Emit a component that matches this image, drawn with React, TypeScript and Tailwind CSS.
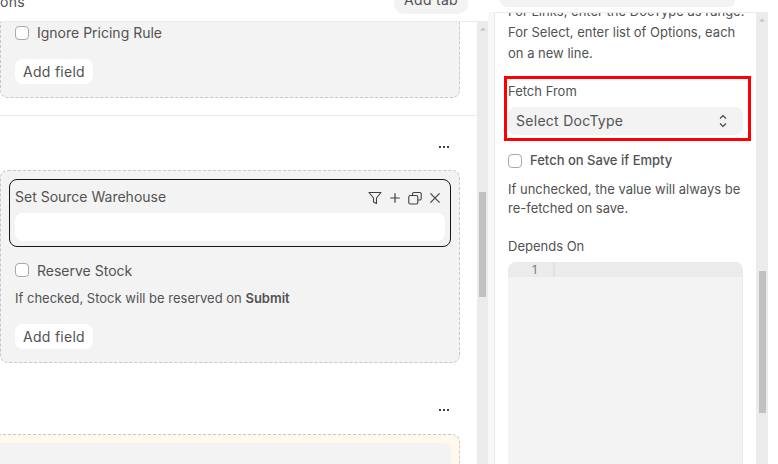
import React from "react";

const Checkbox = (): JSX.Element => (
  <span className="block w-[14px] h-[14px] rounded-[4px] border border-[#a8a8a8] bg-white shrink-0"></span>
);

const AddField = (): JSX.Element => (
  <button className="h-[25px] w-[78px] rounded-[8px] bg-white text-[14px] leading-[25px] tracking-[0.02em] text-[#525252] text-center">Add field</button>
);

const Dots = (): JSX.Element => (
  <div className="flex justify-end gap-[2px] pr-[28px]">
    <span className="w-[2px] h-[2px] bg-[#404040]"></span>
    <span className="w-[2px] h-[2px] bg-[#404040]"></span>
    <span className="w-[2px] h-[2px] bg-[#404040]"></span>
  </div>
);

const Scrollbar = ({ width, top, height }: { width: string; top: string; height: string }): JSX.Element => (
  <div className={`shrink-0 bg-[#ebebeb] flex flex-col items-center ${width}`}>
    <svg width="8" height="6" viewBox="0 0 8 6" className="mt-[4px] shrink-0">
      <path d="M4 1.5L7 4.5H1z" fill="#c4c4c4" />
    </svg>
    <div className={`w-[7px] bg-[#c1c1c1] shrink-0 ${top} ${height}`}></div>
  </div>
);

const FieldIcons = (): JSX.Element => (
  <div className="flex items-center gap-[6px] mt-[2px] text-[#404040]">
    <svg width="14" height="14" viewBox="0 0 14 14" fill="none" stroke="currentColor" strokeWidth="1.1" strokeLinejoin="round">
      <path d="M1 1.5h12L8.5 7v5.5L5.5 11V7z" />
    </svg>
    <svg width="14" height="14" viewBox="0 0 14 14" fill="none" stroke="currentColor" strokeWidth="1.2">
      <path d="M7 2.2v9.6M2.2 7h9.6" />
    </svg>
    <svg width="14" height="14" viewBox="0 0 14 14" fill="none" stroke="currentColor" strokeWidth="1.1">
      <rect x="0.8" y="4.5" width="9" height="8.5" rx="1.5" />
      <path d="M4.5 4.5V3A1.5 1.5 0 0 1 6 1.5h5.7A1.5 1.5 0 0 1 13.2 3v4.5A1.5 1.5 0 0 1 11.7 9H9.8" />
    </svg>
    <svg width="14" height="14" viewBox="0 0 14 14" fill="none" stroke="currentColor" strokeWidth="1.2">
      <path d="M2.4 2.4l9.2 9.2M11.6 2.4l-9.2 9.2" />
    </svg>
  </div>
);

const App = (): JSX.Element => {
  return (
    <div className="relative w-[778px] h-[464px] overflow-hidden bg-white flex font-['Inter',sans-serif] text-[#525252]">
      <div className="w-[488px] h-full flex flex-col shrink-0">
        <div className="h-[22px] shrink-0 border-b border-[#ebebeb] flex justify-between overflow-hidden pr-[20px]">
          <span className="text-[14px] leading-[20px] tracking-[0.02em] -mt-[8px]">ons</span>
          <span className="w-[74px] h-[29px] -mt-[15px] rounded-[10px] bg-[#f3f3f3] text-center text-[14px] leading-[29px] tracking-[0.02em]">Add tab</span>
        </div>
        <div className="flex flex-1 min-h-0">
          <div className="flex-1 min-w-0 overflow-hidden">
            <div className="w-[460px] h-[76px] bg-[#f3f3f3] border border-t-0 border-dashed border-[#c7c7c7] rounded-b-[8px] pl-[14px]">
              <div className="flex items-center gap-[8px] pt-[1px] h-[20px]">
                <Checkbox />
                <span className="text-[14px]">Ignore Pricing Rule</span>
              </div>
              <div className="mt-[17px]"><AddField /></div>
            </div>
            <div className="mt-[17px] border-t border-[#ebebeb]"></div>
            <div className="mt-[30px]"><Dots /></div>
            <div className="mt-[22px] w-[460px] h-[193px] bg-[#f3f3f3] border border-dashed border-[#c7c7c7] rounded-[8px] pt-[8px] pl-[8px]">
              <div className="w-[442px] h-[68px] rounded-[8px] border border-[#171717] px-[5px]">
                <div className="flex items-center justify-between h-[33px] pr-[3px]">
                  <span className="text-[14px]">Set Source Warehouse</span>
                  <FieldIcons />
                </div>
                <div className="h-[28px] rounded-[8px] bg-white"></div>
              </div>
              <div className="pl-[6px]">
                <div className="flex items-center gap-[8px] mt-[13px] h-[20px]">
                  <Checkbox />
                  <span className="text-[14px]">Reserve Stock</span>
                </div>
                <p className="mt-[9px] text-[13px] leading-[18px]">If checked, Stock will be reserved on <b className="font-semibold">Submit</b></p>
                <div className="mt-[17px]"><AddField /></div>
              </div>
            </div>
            <div className="mt-[46px]"><Dots /></div>
            <div className="mt-[23px] -ml-[20px] w-[480px] h-[60px] bg-[#fef9ec] border border-dashed border-[#c7c7c7] rounded-[8px] pt-[8px] pr-[8px]">
              <div className="h-[40px] bg-[#f3f3f3] rounded-tr-[8px]"></div>
            </div>
          </div>
          <Scrollbar width="w-[11px]" top="mt-[160px]" height="h-[105px]" />
        </div>
      </div>

      <div className="w-[7px] h-[452px] mt-[12px] shrink-0 bg-[#f8f8f8] border-r border-[#ebebeb]"></div>

      <div className="w-[273px] h-full shrink-0 flex flex-col">
        <div className="h-[13px] shrink-0 border-b border-[#ebebeb] overflow-hidden pl-[5px] pr-[33px]">
          <div className="h-[7px] rounded-b-[8px] bg-[#f3f3f3]"></div>
        </div>
        <div className="flex flex-1 min-h-0">
          <div className="flex-1 min-w-0 overflow-hidden pl-[13px] pr-[13px]">
            <p className="-mt-[12px] text-[13px] leading-[21px] whitespace-nowrap">For Links, enter the DocType as range:<br />For Select, enter list of Options, each<br />on a new line.</p>
            <div className="mt-[18px] text-[13px] leading-[18px]">Fetch From</div>
            <div className="mt-[7px] h-[28px] rounded-[8px] bg-[#f3f3f3] flex items-center justify-between pl-[8px] pr-[15px] text-[14px] tracking-[0.02em]">
              <span className="-mt-[1px]">Select DocType</span>
              <svg width="10" height="14" viewBox="0 0 10 14" fill="none" stroke="#404040" strokeWidth="1.1">
                <path d="M2 4.5L5 1.5L8 4.5M2 9.5L5 12.5L8 9.5" />
              </svg>
            </div>
            <div className="flex items-center gap-[8px] mt-[16px] h-[20px]">
              <Checkbox />
              <span className="text-[13px] font-medium">Fetch on Save if Empty</span>
            </div>
            <p className="mt-[9px] text-[13px] leading-[19px]">If unchecked, the value will always be re-fetched on save.</p>
            <div className="mt-[19px] text-[13px] leading-[18px]">Depends On</div>
            <div className="mt-[7px] h-[230px] rounded-t-[8px] bg-[#f3f3f3] border-r border-[#ebebeb] overflow-hidden">
              <div className="h-[15px] bg-[#ebebeb] flex text-[12px] leading-[15px] text-[#7c7c7c]">
                <span className="w-[29px] text-right">1</span>
                <span className="ml-[16px] w-[2px] bg-[#e2e2e2]"></span>
              </div>
            </div>
          </div>
          <Scrollbar width="w-[12px]" top="mt-[248px]" height="h-[142px]" />
        </div>
      </div>

      {/* red annotation drawn over the screenshot */}
      <div className="absolute left-[504px] top-[76px] w-[247px] h-[65px] border-[3px] border-[#ff0000]"></div>
    </div>
  );
};

export default App;
